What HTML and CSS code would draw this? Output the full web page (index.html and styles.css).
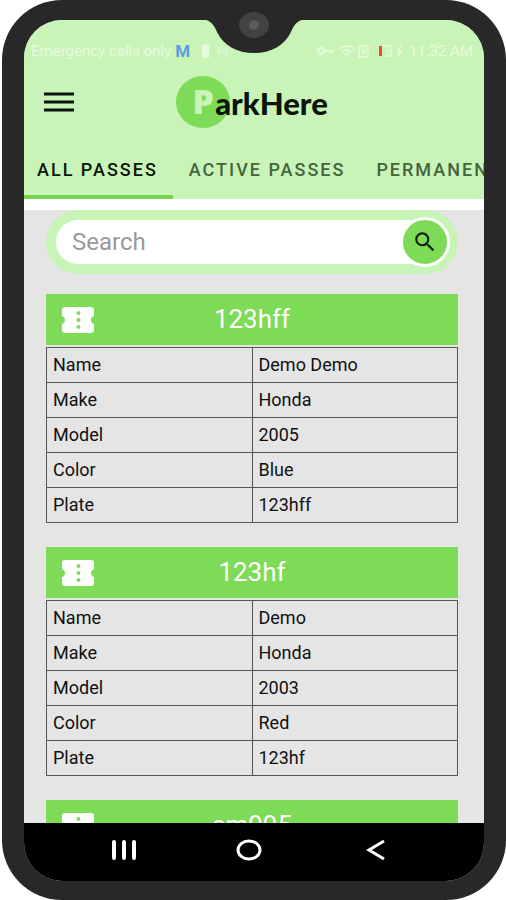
FILE: index.html
```html
<!DOCTYPE html>
<html lang="en">
<head>
    <meta charset="UTF-8">
    <meta name="viewport" content="width=device-width, initial-scale=1.0">
    <title>ParkHere</title>
    <link rel="stylesheet" href="styles.css">
</head>
<body>
<div class="phone">
    <svg class="notch" width="112" height="34" viewBox="0 0 112 34">
        <path fill="#282828" d="M0 0C12 0 15 4 19 13C26 27 39 34 56 34C73 34 86 27 93 13C97 4 100 0 112 0Z"/>
        <ellipse cx="56" cy="6" rx="15" ry="13" fill="#424144"/>
        <circle cx="56" cy="6" r="5" fill="#5b5a5d"/>
    </svg>
    <div class="screen">
        <header class="header">
            <div class="status-bar">
                <div class="status-left">
                    <span>Emergency calls only</span>
                    <b class="status-mail">M</b>
                    <svg width="38" height="14" viewBox="0 0 38 14">
                        <path fill="#e6fbdc" d="M8 1h2V0h3v1h2v13H8z"/>
                        <path fill="none" stroke="#d9f7cb" stroke-width="1.5" d="M24 3l9 8M24 11l9-8M24 3v8M33 3v8"/>
                    </svg>
                </div>
                <div class="status-right">
                    <svg width="90" height="16" viewBox="0 0 90 16" fill="none" stroke="#e6fbdc" stroke-width="2">
                        <circle cx="6" cy="8" r="3"/>
                        <path d="M9 8h10M16 8v3"/>
                        <path stroke-width="1.5" d="M24 6q8-6 16 0M27 9q5-4 10 0M30 12q2-2 4 0"/>
                        <path stroke-width="1.5" d="M44 3h9v11h-9zM48 6v5M50 6v5"/>
                        <path stroke-width="1.5" d="M68 3h8v10h-8M73 6v4M86 2l-3 6h3l-3 6"/>
                        <path stroke="#f04a32" stroke-width="3" d="M65.500 3v10"/>
                    </svg>
                    <span>11:32 AM</span>
                </div>
            </div>
            <div class="top-bar">
                <button class="menu-button" aria-label="Menu">
                    <svg width="30" height="20" viewBox="0 0 30 20">
                        <path stroke="#0b140a" stroke-width="3" d="M0 2h30M0 10h30M0 18h30"/>
                    </svg>
                </button>
                <div class="logo"><span class="logo-mark">P</span><span class="logo-text">arkHere</span></div>
            </div>
            <nav class="tabs">
                <a class="tab active" href="#all">ALL PASSES</a>
                <a class="tab" href="#active">ACTIVE PASSES</a>
                <a class="tab" href="#permanent">PERMANENT</a>
            </nav>
        </header>

        <main class="content">
            <form class="search">
                <input class="search-input" type="text" placeholder="Search" aria-label="Search">
                <button class="search-button" type="button" aria-label="Search">
                    <svg width="26" height="26" viewBox="0 0 24 24">
                        <path fill="#10200c" d="M15.500 14h-.79l-.28-.27A6.470 6.470 0 0 0 16 9.500 6.500 6.500 0 1 0 9.500 16c1.610 0 3.090-.59 4.230-1.570l.27.28v.79l5 4.990L20.490 19l-4.990-5zm-6 0C7.010 14 5 11.990 5 9.500S7.010 5 9.500 5 14 7.010 14 9.500 11.990 14 9.500 14z"/>
                    </svg>
                </button>
            </form>

            <section class="pass">
                <h2 class="pass-title">
                    <svg class="ticket" width="34" height="28" viewBox="0 0 34 28">
                        <path fill="#fff" d="M4 1h26q3 0 3 3v6q-3 1-3 4t3 4v6q0 3-3 3H4q-3 0-3-3v-6q3-1 3-4t-3-4V4q0-3 3-3z"/>
                        <g fill="#7edb57">
                            <circle cx="17.500" cy="7" r="2"/>
                            <circle cx="17.500" cy="14" r="2"/>
                            <circle cx="17.500" cy="21" r="2"/>
                        </g>
                    </svg>
                    123hff
                </h2>
                <table class="pass-table">
                    <tr><th scope="row">Name</th><td>Demo Demo</td></tr>
                    <tr><th scope="row">Make</th><td>Honda</td></tr>
                    <tr><th scope="row">Model</th><td>2005</td></tr>
                    <tr><th scope="row">Color</th><td>Blue</td></tr>
                    <tr><th scope="row">Plate</th><td>123hff</td></tr>
                </table>
            </section>

            <section class="pass">
                <h2 class="pass-title">
                    <svg class="ticket" width="34" height="28" viewBox="0 0 34 28">
                        <path fill="#fff" d="M4 1h26q3 0 3 3v6q-3 1-3 4t3 4v6q0 3-3 3H4q-3 0-3-3v-6q3-1 3-4t-3-4V4q0-3 3-3z"/>
                        <g fill="#7edb57">
                            <circle cx="17.500" cy="7" r="2"/>
                            <circle cx="17.500" cy="14" r="2"/>
                            <circle cx="17.500" cy="21" r="2"/>
                        </g>
                    </svg>
                    123hf
                </h2>
                <table class="pass-table">
                    <tr><th scope="row">Name</th><td>Demo</td></tr>
                    <tr><th scope="row">Make</th><td>Honda</td></tr>
                    <tr><th scope="row">Model</th><td>2003</td></tr>
                    <tr><th scope="row">Color</th><td>Red</td></tr>
                    <tr><th scope="row">Plate</th><td>123hf</td></tr>
                </table>
            </section>

            <section class="pass">
                <h2 class="pass-title">
                    <svg class="ticket" width="34" height="28" viewBox="0 0 34 28">
                        <path fill="#fff" d="M4 1h26q3 0 3 3v6q-3 1-3 4t3 4v6q0 3-3 3H4q-3 0-3-3v-6q3-1 3-4t-3-4V4q0-3 3-3z"/>
                        <g fill="#7edb57">
                            <circle cx="17.500" cy="7" r="2"/>
                            <circle cx="17.500" cy="14" r="2"/>
                            <circle cx="17.500" cy="21" r="2"/>
                        </g>
                    </svg>
                    sm995
                </h2>
            </section>
        </main>

        <footer class="nav-bar">
            <button class="nav-button" aria-label="Recent apps">
                <svg width="32" height="24" viewBox="0 0 32 24">
                    <path stroke="#fff" stroke-width="4" stroke-linecap="round" d="M6 4v16M16 4v16M26 4v16"/>
                </svg>
            </button>
            <button class="nav-button" aria-label="Home">
                <svg width="32" height="24" viewBox="0 0 32 24">
                    <ellipse cx="15" cy="12" rx="11" ry="9" fill="none" stroke="#fff" stroke-width="3"/>
                </svg>
            </button>
            <button class="nav-button" aria-label="Back">
                <svg width="32" height="24" viewBox="0 0 32 24">
                    <path fill="none" stroke="#fff" stroke-width="3" d="M24 3L9 12L24 21"/>
                </svg>
            </button>
        </footer>
    </div>
</div>
</body>
</html>
```
FILE: styles.css
```css
* {
    box-sizing: border-box;
}

body {
    margin: 0;
    background-color: #ffffff;
    font-family: Roboto, "Liberation Sans", sans-serif;
    color: #111111;
}

button {
    padding: 0;
    border: none;
    background: none;
    display: flex;
    align-items: center;
    justify-content: center;
}

.phone {
    position: relative;
    height: 100vh;
    margin: 0 0 0 2px;
    padding: 20px 22px 19px 22px;
    border-radius: 60px;
    background-color: #282828;
}

.notch {
    position: absolute;
    top: 19px;
    left: 50%;
    margin-left: -56px;
    overflow: visible;
}

.screen {
    height: 100%;
    display: flex;
    flex-direction: column;
    overflow: hidden;
    border-radius: 38px;
    background-color: #e5e5e5;
}

.header {
    flex: none;
    border-bottom: 11px solid #ffffff;
    background-color: #c9f4b8;
}

.status-bar {
    display: flex;
    justify-content: space-between;
    padding: 21px 11px 0 7px;
    font-size: 15px;
    line-height: 20px;
    color: #e6fbdc;
    white-space: nowrap;
}

.status-left,
.status-right {
    display: flex;
    align-items: center;
    gap: 4px;
}

.status-mail {
    font-size: 17px;
    color: #5c9ce0;
}

.top-bar {
    position: relative;
    height: 82px;
    padding: 0 24px 0 20px;
    display: flex;
    align-items: center;
    justify-content: center;
}

.menu-button {
    position: absolute;
    left: 20px;
}

.logo {
    display: flex;
    align-items: center;
    font-family: Lato, sans-serif;
    font-weight: 900;
}

.logo-mark {
    width: 54px;
    height: 52px;
    border-radius: 50%;
    background-color: #7edb57;
    color: #c9f4b8;
    font-family: "Open Sans", sans-serif;
    font-weight: 800;
    font-size: 34px;
    line-height: 50px;
    text-align: center;
}

.logo-text {
    margin-left: -15px;
    padding-top: 2px;
    font-size: 31px;
    color: #0b140a;
}

.tabs {
    display: flex;
    overflow: hidden;
}

.tab {
    flex: none;
    height: 56px;
    padding: 0 15px 0 16px;
    border-bottom: 4px solid transparent;
    font-size: 18px;
    font-weight: 500;
    line-height: 54px;
    letter-spacing: 2px;
    color: #44653d;
    text-decoration: none;
}

.tab.active {
    padding-left: 13px;
    border-color: #78d450;
    color: #0b140a;
}

.content {
    flex: 1;
    min-height: 0;
    overflow: hidden;
    padding: 0 26px 0 22px;
}

.search {
    display: flex;
    align-items: center;
    height: 64px;
    margin-bottom: 20px;
    padding: 0 8px 0 10px;
    border-radius: 32px;
    background-color: #c9f4b8;
}

.search-input {
    flex: 1;
    min-width: 0;
    height: 44px;
    padding: 0 16px;
    border: none;
    border-radius: 22px 0 0 22px;
    outline: none;
    background-color: #ffffff;
    font-family: inherit;
    font-size: 24px;
}

.search-input::placeholder {
    color: #999999;
}

.search-button {
    width: 50px;
    height: 50px;
    margin-left: -25px;
    border: 3px solid #ffffff;
    border-radius: 50%;
    background-color: #7edb57;
}

.pass {
    margin-bottom: 24px;
}

.pass-title {
    position: relative;
    height: 51px;
    margin: 0 0 2px;
    background-color: #7edb57;
    color: #ffffff;
    font-size: 26px;
    font-weight: 400;
    line-height: 51px;
    text-align: center;
}

.ticket {
    position: absolute;
    top: 12px;
    left: 15px;
}

.pass-table {
    width: 100%;
    border: 1px solid #8a8a8a;
    border-collapse: collapse;
    table-layout: fixed;
    font-size: 18px;
    line-height: 34px;
}

.pass-table th,
.pass-table td {
    height: 35px;
    padding: 0 6px;
    border: 1px solid #555555;
    font-weight: 400;
    text-align: left;
}

.nav-bar {
    flex: none;
    display: flex;
    align-items: center;
    justify-content: space-between;
    height: 58px;
    padding: 0 92px 4px 84px;
    background-color: #000000;
}
```
